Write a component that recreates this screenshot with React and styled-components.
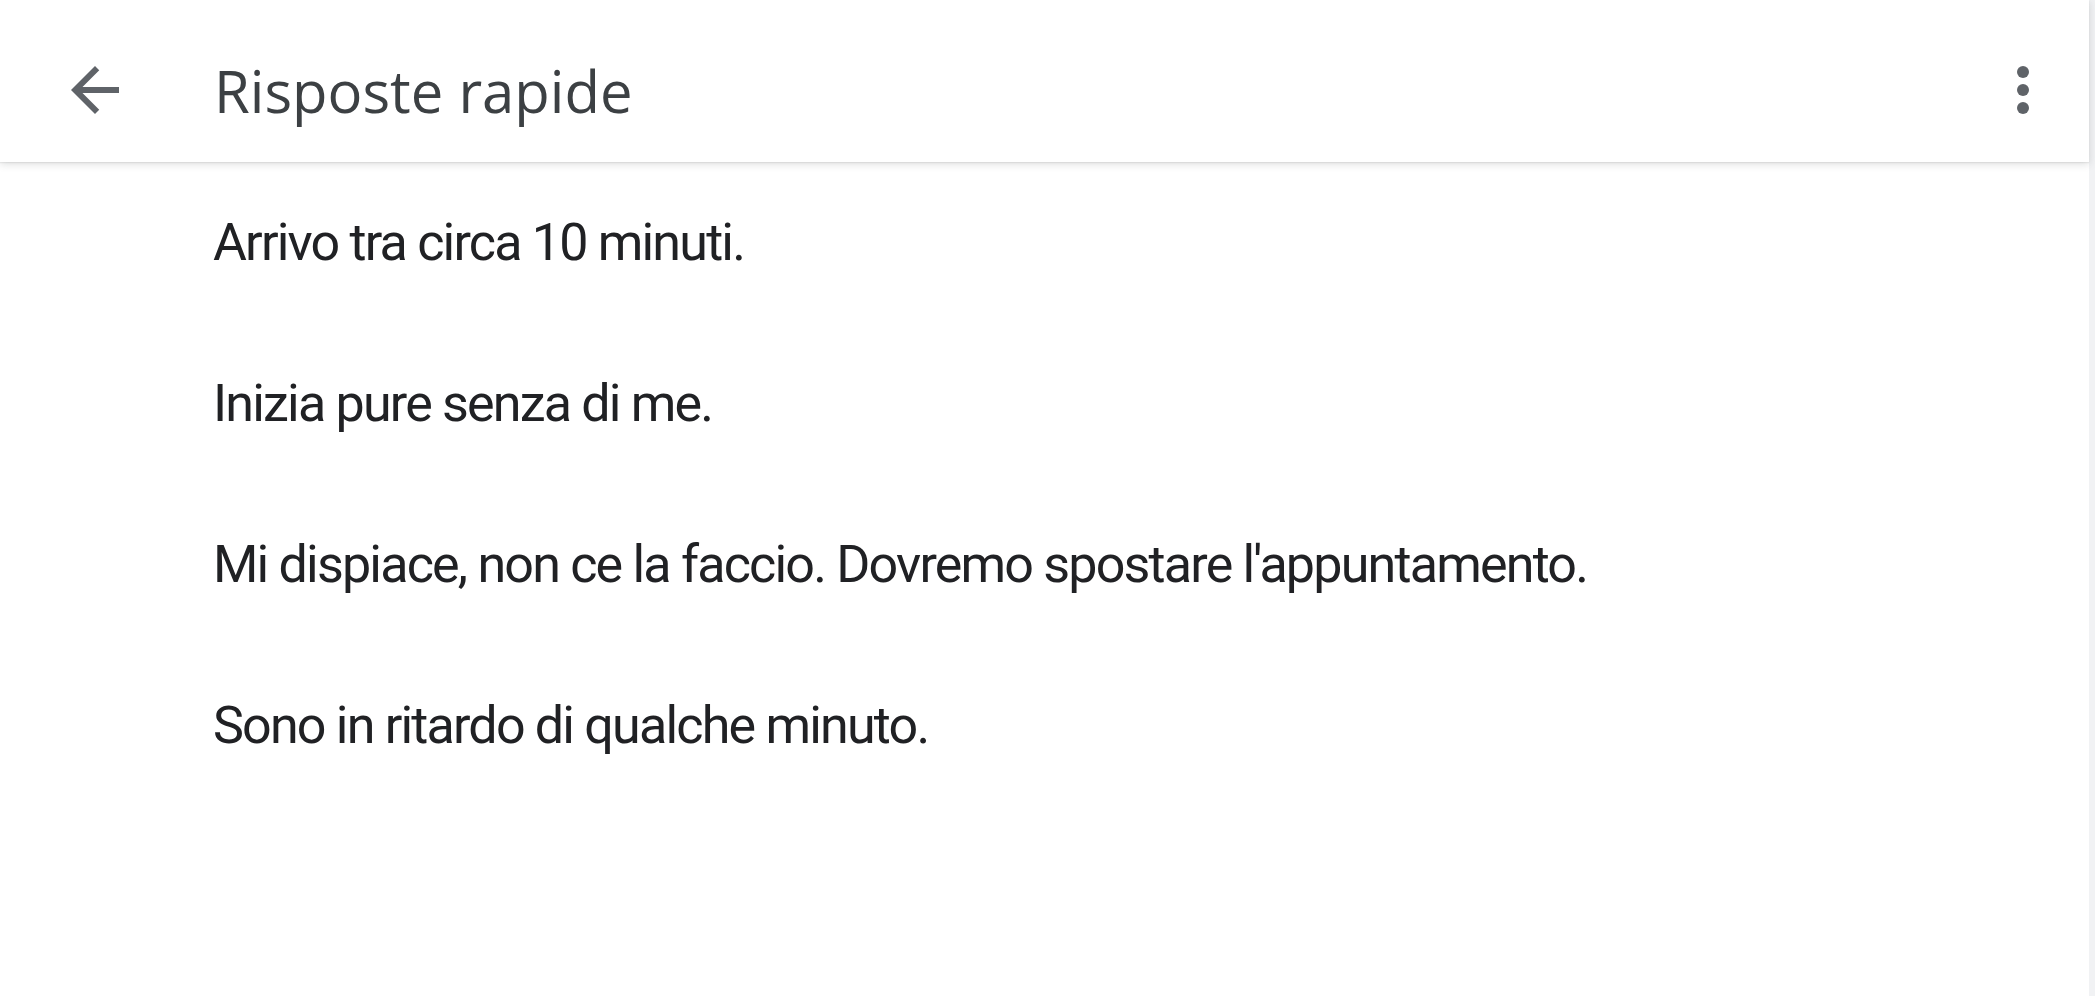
import React from 'react';
import styled, { createGlobalStyle } from 'styled-components';

const GlobalStyle = createGlobalStyle`
  html, body {
    margin: 0;
    padding: 0;
    background: #ffffff;
  }
  body {
    font-family: Roboto, "Liberation Sans", sans-serif;
  }
`

const Screen = styled.div`
  display: flex;
  width: 100vw;
  height: 100vh;
  overflow: hidden;
`

const Main = styled.div`
  flex: 1;
  display: flex;
  flex-direction: column;
  background: #ffffff;
`

const Scrollbar = styled.div`
  width: 6px;
  background: #f1f2f4;
`

const TopBar = styled.header`
  height: 162px;
  box-sizing: border-box;
  padding: 18px 30px 0 59px;
  display: flex;
  align-items: center;
  background: #ffffff;
  box-shadow: 0 2px 8px rgba(60, 64, 67, 0.18), 0 1px 1px rgba(60, 64, 67, 0.08);
  position: relative;
  z-index: 1;
`

const IconButton = styled.div`
  width: 72px;
  height: 72px;
  display: flex;
  align-items: center;
  justify-content: center;
  color: #5f6368;
  cursor: pointer;
`

const Title = styled.h1`
  flex: 1;
  margin: 0 0 0 83px;
  font-family: "Open Sans", Roboto, sans-serif;
  font-weight: 400;
  font-size: 58px;
  color: #3c4043;
  letter-spacing: 0;
`

const List = styled.div`
  display: flex;
  flex-direction: column;
`

const Reply = styled.div`
  height: 161px;
  display: flex;
  align-items: center;
  padding-left: 213px;
  font-size: 52px;
  letter-spacing: -1.8px;
  color: #202124;
  cursor: pointer;
`

const replies = [
  'Arrivo tra circa 10 minuti.',
  'Inizia pure senza di me.',
  "Mi dispiace, non ce la faccio. Dovremo spostare l'appuntamento.",
  'Sono in ritardo di qualche minuto.',
];

function BackIcon() {
  return (
    <svg width="72" height="72" viewBox="0 0 24 24" fill="currentColor">
      <path d="M20 11H7.83l5.59-5.59L12 4l-8 8 8 8 1.41-1.41L7.83 13H20v-2z" />
    </svg>
  );
}

function MoreIcon() {
  return (
    <svg width="72" height="72" viewBox="0 0 24 24" fill="currentColor">
      <circle cx="12" cy="6" r="2" />
      <circle cx="12" cy="12" r="2" />
      <circle cx="12" cy="18" r="2" />
    </svg>
  );
}

export default function App() {
  return (
    <Screen>
      <GlobalStyle />
      <Main>
        <TopBar>
          <IconButton><BackIcon /></IconButton>
          <Title>Risposte rapide</Title>
          <IconButton><MoreIcon /></IconButton>
        </TopBar>
        <List>
          {replies.map((text) => (
            <Reply key={text}>{text}</Reply>
          ))}
        </List>
      </Main>
      <Scrollbar />
    </Screen>
  );
}
